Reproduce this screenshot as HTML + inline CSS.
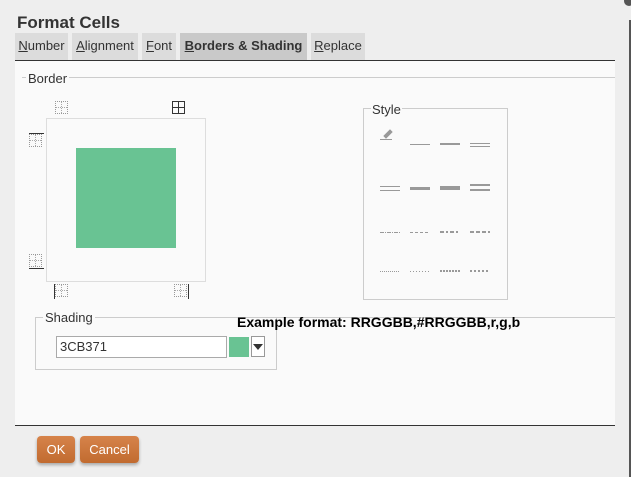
<!DOCTYPE html><html><head><style>
body{margin:0;width:631px;height:477px;background:#eeeeee;font-family:"Liberation Sans",sans-serif;position:relative;overflow:hidden}
.a{position:absolute}
.tab{position:absolute;top:33px;height:27px;background:#dcdcdc;font-size:13px;color:#333;line-height:25px;text-align:center}
.ic{position:absolute;width:13px;height:13px;border:1px dotted #999;box-sizing:border-box}
.ic:before{content:"";position:absolute;left:5px;top:0;bottom:0;border-left:1px dotted #aaa}
.ic:after{content:"";position:absolute;top:5px;left:0;right:0;border-top:1px dotted #aaa}
.ln{position:absolute;background:#999}
.btn{position:absolute;top:436px;height:27px;background:linear-gradient(#d6834a,#c16b30);border-radius:4px;color:#fff;font-size:13px;line-height:27px;text-align:center;box-shadow:0 2px 3px rgba(0,0,0,.3)}
</style></head><body>
<div class="a" style="left:17px;top:13px;font-size:17px;font-weight:bold;color:#333">Format Cells</div>
<div class="tab" style="left:15px;width:53px"><u>N</u>umber</div>
<div class="tab" style="left:72px;width:66px"><u>A</u>lignment</div>
<div class="tab" style="left:142px;width:34px"><u>F</u>ont</div>
<div class="tab" style="left:180px;width:127px;background:#c9c9c9;font-weight:bold"><u>B</u>orders &amp; Shading</div>
<div class="tab" style="left:311px;width:54px"><u>R</u>eplace</div>
<div class="a" style="left:15px;top:60px;width:600px;height:364px;background:#fafafa;border-top:1px solid #333;border-bottom:1px solid #333"></div>
<div class="a" style="left:629px;top:20px;width:2px;height:457px;background:#555"></div>
<div class="a" style="left:624px;top:-4px;width:10px;height:10px;border-radius:50%;background:#555"></div>
<div class="a" style="left:22px;top:77px;width:593px;border-top:1px solid #ccc"></div>
<div class="a" style="left:26px;top:71px;background:#fafafa;padding:0 2px;font-size:13px;color:#333">Border</div>
<div class="ic" style="left:55px;top:101px"></div>
<div class="a" style="left:172px;top:101px;width:13px;height:13px;border:1px solid #333;box-sizing:border-box"><div class="a" style="left:5px;top:0;bottom:0;border-left:1px solid #333"></div><div class="a" style="top:5px;left:0;right:0;border-top:1px solid #333"></div></div>
<div class="ic" style="left:29px;top:134px"></div><div class="ln" style="left:29px;top:133px;width:15px;height:1px;background:#333"></div>
<div class="ic" style="left:29px;top:254px"></div><div class="ln" style="left:29px;top:268px;width:15px;height:1px;background:#333"></div>
<div class="ic" style="left:55px;top:284px"></div><div class="ln" style="left:54px;top:284px;width:1px;height:15px;background:#333"></div>
<div class="ic" style="left:174px;top:284px"></div><div class="ln" style="left:188px;top:284px;width:1px;height:15px;background:#333"></div>
<div class="a" style="left:46px;top:118px;width:158px;height:162px;border:1px solid #ddd"></div>
<div class="a" style="left:76px;top:148px;width:100px;height:100px;background:#69c393"></div>
<div class="a" style="left:363px;top:108px;width:143px;height:190px;border:1px solid #ccc"></div>
<div class="a" style="left:371px;top:102px;background:#fafafa;padding:0 1px;font-size:13px;color:#333">Style</div>
<svg class="a" style="left:363px;top:108px" width="144" height="190">
<g fill="none" stroke="#999">
<path d="M21 28l6-6 2 2-6 6z" fill="#999"/><line x1="17" y1="31.5" x2="29" y2="31.5"/>
<line x1="47" y1="36.5" x2="67" y2="36.5"/>
<line x1="77" y1="36" x2="97" y2="36" stroke-width="2"/>
<line x1="107" y1="35.5" x2="127" y2="35.5"/><line x1="107" y1="38.5" x2="127" y2="38.5"/>
<line x1="17" y1="78.5" x2="37" y2="78.5"/><line x1="17" y1="82.5" x2="37" y2="82.5"/>
<line x1="47" y1="80.5" x2="67" y2="80.5" stroke-width="3"/>
<line x1="77" y1="80" x2="97" y2="80" stroke-width="4"/>
<line x1="107" y1="77" x2="127" y2="77" stroke-width="2"/><line x1="107" y1="82" x2="127" y2="82" stroke-width="2"/>
<line x1="17" y1="124.5" x2="37" y2="124.5" stroke-dasharray="4 1 1 1"/>
<line x1="47" y1="124.5" x2="67" y2="124.5" stroke-dasharray="3 2"/>
<line x1="77" y1="124" x2="97" y2="124" stroke-width="2" stroke-dasharray="4 2 2 2"/>
<line x1="107" y1="124" x2="127" y2="124" stroke-width="2" stroke-dasharray="4 2"/>
<line x1="17" y1="163.5" x2="37" y2="163.5" stroke-dasharray="1 1"/>
<line x1="47" y1="163.5" x2="67" y2="163.5" stroke-dasharray="1 2"/>
<line x1="77" y1="163" x2="97" y2="163" stroke-width="2" stroke-dasharray="2 1"/>
<line x1="107" y1="163" x2="127" y2="163" stroke-width="2" stroke-dasharray="2 2"/>
</g></svg>
<div class="a" style="left:35px;top:317px;width:240px;height:51px;border:1px solid #ccc"></div>
<div class="a" style="left:275px;top:317px;width:340px;border-top:1px solid #ccc"></div>
<div class="a" style="left:43px;top:310px;background:#fafafa;padding:0 2px;font-size:13px;color:#333">Shading</div>
<div class="a" style="left:237px;top:314px;font-size:14px;font-weight:bold;color:#000">Example format: RRGGBB,#RRGGBB,r,g,b</div>
<div class="a" style="left:56px;top:336px;border:1px solid #aaa;background:#fff;font-size:13px;line-height:20px;color:#333;padding-left:3px;box-sizing:border-box;width:171px;height:22px">3CB371</div>
<div class="a" style="left:229px;top:337px;width:20px;height:20px;background:#69c393"></div>
<div class="a" style="left:251px;top:336px;width:14px;height:21px;border:1px solid #999;background:#fff;box-sizing:border-box"><div class="a" style="left:1px;top:7px;border-left:5px solid transparent;border-right:5px solid transparent;border-top:6px solid #333"></div></div>
<div class="btn" style="left:37px;width:38px">OK</div>
<div class="btn" style="left:80px;width:59px">Cancel</div>
</body></html>
